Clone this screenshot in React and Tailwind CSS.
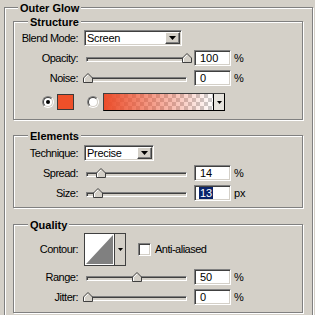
import React from "react";

function Frame({ title, titleLeft, className, children }) {
  return (
    <div
      className={
        "relative border border-[#808080] shadow-[inset_1px_1px_0_#ffffff,1px_1px_0_#ffffff] " +
        className
      }
    >
      <span
        className={
          "absolute top-[-6px] bg-[#d4d0c8] px-[2px] text-[11px] leading-[13px] font-bold tracking-normal text-black " +
          titleLeft
        }
      >
        {title}
      </span>
      {children}
    </div>
  );
}

function Label({ children }) {
  return <div className="w-[64px] shrink-0 text-right tracking-[-0.5px]">{children}</div>;
}

function Arrow() {
  return (
    <svg width="7" height="4" viewBox="0 0 7 4" className="block">
      <polygon points="0,0 7,0 3.5,4" fill="#000" />
    </svg>
  );
}

function Select({ width, value }) {
  return (
    <div
      className={
        "flex h-[16px] bg-white border border-t-[#808080] border-l-[#808080] border-b-white border-r-white shadow-[inset_1px_1px_0_#404040,inset_-1px_-1px_0_#d4d0c8] p-[1px] " +
        width
      }
    >
      <div className="flex-1 pl-[1px] flex items-center tracking-[-0.3px]">{value}</div>
      <div className="w-[15px] flex items-center justify-center bg-[#d4d0c8] border border-t-white border-l-white border-b-[#404040] border-r-[#404040] shadow-[inset_-1px_-1px_0_#808080]">
        <Arrow />
      </div>
    </div>
  );
}

function Input({ value, selected }) {
  return (
    <div
      className={
        "w-[37px] h-[16px] shrink-0 bg-white border border-t-[#808080] border-l-[#808080] border-b-white border-r-white shadow-[inset_1px_1px_0_#404040,inset_-1px_-1px_0_#d4d0c8] flex items-center " +
        (selected ? "pl-[4px]" : "pl-[5px]")
      }
    >
      {selected ? (
        <span className="bg-[#0a246a] text-white px-[1px] leading-[12px]">{value}</span>
      ) : (
        <span>{value}</span>
      )}
    </div>
  );
}

function Thumb() {
  return (
    <svg width="10" height="10" viewBox="0 0 10 10" className="block">
      <polygon points="0.5,9.5 0.5,5 5,0.5 9.5,5 9.5,9.5" fill="#d4d0c8" stroke="#404040" strokeWidth="1" />
      <polyline points="1.5,9 1.5,5.4 5,1.9" fill="none" stroke="#ffffff" strokeWidth="1" />
    </svg>
  );
}

function Slider({ pos }) {
  return (
    <div className="relative w-[108px] h-[16px] shrink-0 ml-[5px]">
      <div className="absolute left-[3px] top-[7px] w-[101px] h-[5px] bg-[#d4d0c8] border border-t-[#808080] border-l-[#808080] border-b-white border-r-white shadow-[inset_1px_1px_0_#404040]" />
      <div className="absolute top-[3px]" style={{ left: pos + "px" }}>
        <Thumb />
      </div>
    </div>
  );
}

function SliderRow({ label, value, pos, unit, selected }) {
  return (
    <div className="flex items-center h-[16px]">
      <Label>{label}</Label>
      <Slider pos={pos} />
      <div className="ml-[3px]">
        <Input value={value} selected={selected} />
      </div>
      <div className="ml-[3px]">{unit}</div>
    </div>
  );
}

function Radio({ checked }) {
  return (
    <div className="w-[12px] h-[12px] rounded-full border border-t-[#808080] border-l-[#808080] border-b-white border-r-white shrink-0">
      <div className="w-full h-full rounded-full bg-white border border-t-[#404040] border-l-[#404040] border-b-[#d4d0c8] border-r-[#d4d0c8] flex items-center justify-center">
        {checked && <div className="w-[4px] h-[4px] rounded-full bg-black" />}
      </div>
    </div>
  );
}

export default function App() {
  return (
    <div className="w-[315px] h-[315px] overflow-hidden bg-[#d4d0c8] pt-[7px] pl-[4px] font-['Liberation_Sans',Arial,sans-serif] text-[11px] leading-[13px] text-black">
      <Frame title="Outer Glow" titleLeft="left-[13px]" className="w-[309px] pt-[13px] pl-[8px] pb-[10px]">
        {/* Structure */}
        <Frame title="Structure" titleLeft="left-[14px]" className="w-[290px] h-[99px] pt-[8px] flex flex-col gap-[4px]">
          <div className="flex items-center h-[16px]">
            <Label>Blend Mode:</Label>
            <div className="ml-[6px]">
              <Select width="w-[98px]" value="Screen" />
            </div>
          </div>
          <SliderRow label="Opacity:" value="100" pos={99} unit="%" />
          <SliderRow label="Noise:" value="0" pos={0} unit="%" />
          <div className="flex items-center h-[18px] mt-[3px] pl-[28px]">
            <Radio checked />
            <div className="ml-[3px] w-[17px] h-[16px] bg-[#ee5029] border border-[#3a3a3a]" />
            <div className="ml-[13px]">
              <Radio />
            </div>
            <div className="ml-[4px] w-[122px] h-[18px] flex border border-t-[#404040] border-l-[#404040] border-b-black border-r-black">
              <div className="flex-1 relative bg-white bg-[conic-gradient(#cccccc_25%,#ffffff_0_50%,#cccccc_0_75%,#ffffff_0)] bg-[length:8px_8px]">
                <div className="absolute inset-0 bg-[linear-gradient(to_right,#ec4d2a,rgba(236,77,42,0.55)_45%,rgba(236,77,42,0))]" />
              </div>
              <div className="w-[11px] border-l border-black bg-[#e6e3dd] flex items-center justify-center">
                <svg width="5" height="3" viewBox="0 0 5 3" className="block">
                  <polygon points="0,0 5,0 2.5,3" fill="#000" />
                </svg>
              </div>
            </div>
          </div>
        </Frame>

        {/* Elements */}
        <Frame title="Elements" titleLeft="left-[14px]" className="mt-[15px] w-[290px] h-[73px] pt-[9px] flex flex-col gap-[4px]">
          <div className="flex items-center h-[16px]">
            <Label>Technique:</Label>
            <div className="ml-[6px]">
              <Select width="w-[70px]" value="Precise" />
            </div>
          </div>
          <SliderRow label="Spread:" value="14" pos={13} unit="%" />
          <SliderRow label="Size:" value="13" pos={10} unit="px" selected />
        </Frame>

        {/* Quality */}
        <Frame title="Quality" titleLeft="left-[14px]" className="mt-[16px] w-[290px] h-[89px] pt-[8px] flex flex-col">
          <div className="flex items-center h-[33px]">
            <Label>Contour:</Label>
            <div className="ml-[6px] w-[42px] h-[33px] flex border border-[#404040]">
              <div className="flex-1 bg-white p-[1px]">
                <svg width="100%" height="100%" viewBox="0 0 28 29" preserveAspectRatio="none" className="block">
                  <polygon points="0,29 28,0 28,29" fill="#808080" />
                </svg>
              </div>
              <div className="w-[11px] border-l border-[#404040] bg-[#d4d0c8] flex items-center justify-center">
                <svg width="5" height="3" viewBox="0 0 5 3" className="block">
                  <polygon points="0,0 5,0 2.5,3" fill="#000" />
                </svg>
              </div>
            </div>
            <div className="ml-[12px] w-[13px] h-[13px] bg-white border border-t-[#808080] border-l-[#808080] border-b-white border-r-white shadow-[inset_1px_1px_0_#404040,inset_-1px_-1px_0_#d4d0c8]" />
            <div className="ml-[4px] tracking-[-0.5px]">Anti-aliased</div>
          </div>
          <div className="mt-[3px]">
            <SliderRow label="Range:" value="50" pos={49} unit="%" />
          </div>
          <div className="mt-[4px]">
            <SliderRow label="Jitter:" value="0" pos={0} unit="%" />
          </div>
        </Frame>
      </Frame>
    </div>
  );
}
